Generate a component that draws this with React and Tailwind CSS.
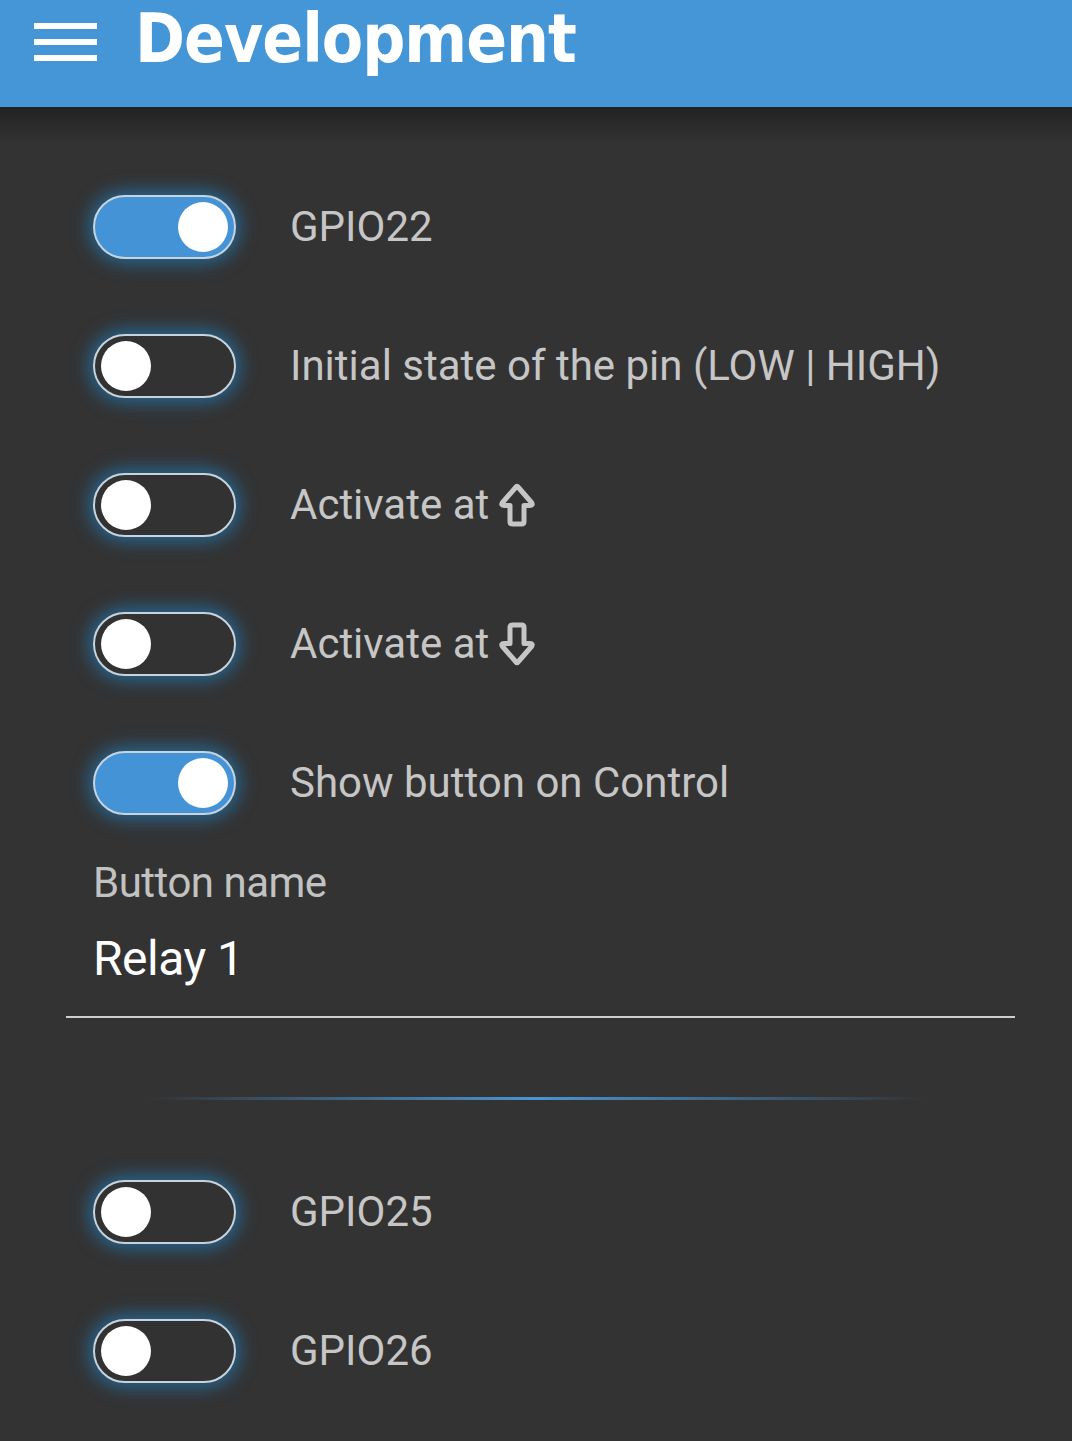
import React from "react";

function Toggle({ on }) {
    return (
        <div
            className={
                "w-[143px] h-[64px] rounded-full border-2 border-[#c9d3dc] flex items-center px-[6px] shadow-[0_0_18px_4px_rgba(30,140,215,0.6)] " +
                (on ? "bg-[#4493d6] justify-end" : "bg-[#323232] justify-start")
            }
        >
            <div className="w-[50px] h-[50px] rounded-full bg-white" />
        </div>
    );
}

const arrowPath =
    "M17 4 Q18 2.5 19 4 L32.5 19.5 Q34.5 22.5 31 22.5 L25 22.5 L25 38.5 Q25 41 22.5 41 L13.5 41 Q11 41 11 38.5 L11 22.5 L5 22.5 Q1.5 22.5 3.5 19.5 Z";

function Arrow({ down }) {
    return (
        <svg
            width="36"
            height="44"
            viewBox="0 0 36 44"
            className={"inline-block ml-[10px]" + (down ? " rotate-180" : "")}
        >
            <path d={arrowPath} fill="none" stroke="#c6c6c6" strokeWidth="5" strokeLinejoin="round" />
        </svg>
    );
}

function Row({ on, children }) {
    return (
        <div className="h-[139px] flex items-center pl-[93px]">
            <Toggle on={on} />
            <div className="ml-[54px] text-[42px] text-[#c6c6c6] flex items-center">{children}</div>
        </div>
    );
}

export default function App() {
    return (
        <div className="w-[1072px] h-[1441px] bg-[#333333] overflow-hidden font-['Roboto',sans-serif]">
            <div className="relative h-[107px] bg-[#4596d6] flex items-start">
                <div className="ml-[34px] mt-[23px] flex flex-col gap-[10px]">
                    <div className="w-[63px] h-[6px] bg-white" />
                    <div className="w-[63px] h-[6px] bg-white" />
                    <div className="w-[63px] h-[6px] bg-white" />
                </div>
                <h1 className="ml-[38px] mt-[6px] text-[67px] leading-[1.2] -translate-y-[7px] font-bold text-white font-['DejaVu_Sans_Condensed','Liberation_Sans_Narrow',sans-serif] tracking-[-1px]">
                    Development
                </h1>
                <div className="absolute left-0 right-0 top-[107px] h-[36px] bg-gradient-to-b from-[#222222] to-transparent" />
            </div>

            <div className="pt-[50px]">
                <Row on>GPIO22</Row>
                <Row>Initial state of the pin (LOW | HIGH)</Row>
                <Row>
                    Activate at <Arrow />
                </Row>
                <Row>
                    Activate at <Arrow down />
                </Row>
                <Row on>Show button on Control</Row>

                <div className="px-[66px]">
                    <div className="pl-[27px] text-[42px] leading-none text-[#c2c2c2] tracking-[-0.5px] pt-[10px]">
                        Button name
                    </div>
                    <div className="pl-[27px] mt-[31px] text-[48px] leading-none text-white tracking-[-0.5px]">
                        Relay 1
                    </div>
                    <div className="mt-[33px] h-[2px] w-[949px] bg-[#cfcfcf]" />
                </div>

                <div className="mt-[79px] mx-auto w-[780px] h-[3px] bg-gradient-to-r from-transparent via-[#4a95d2] to-transparent" />

                <div className="pt-[42px]">
                    <Row>GPIO25</Row>
                    <Row>GPIO26</Row>
                </div>
            </div>
        </div>
    );
}
